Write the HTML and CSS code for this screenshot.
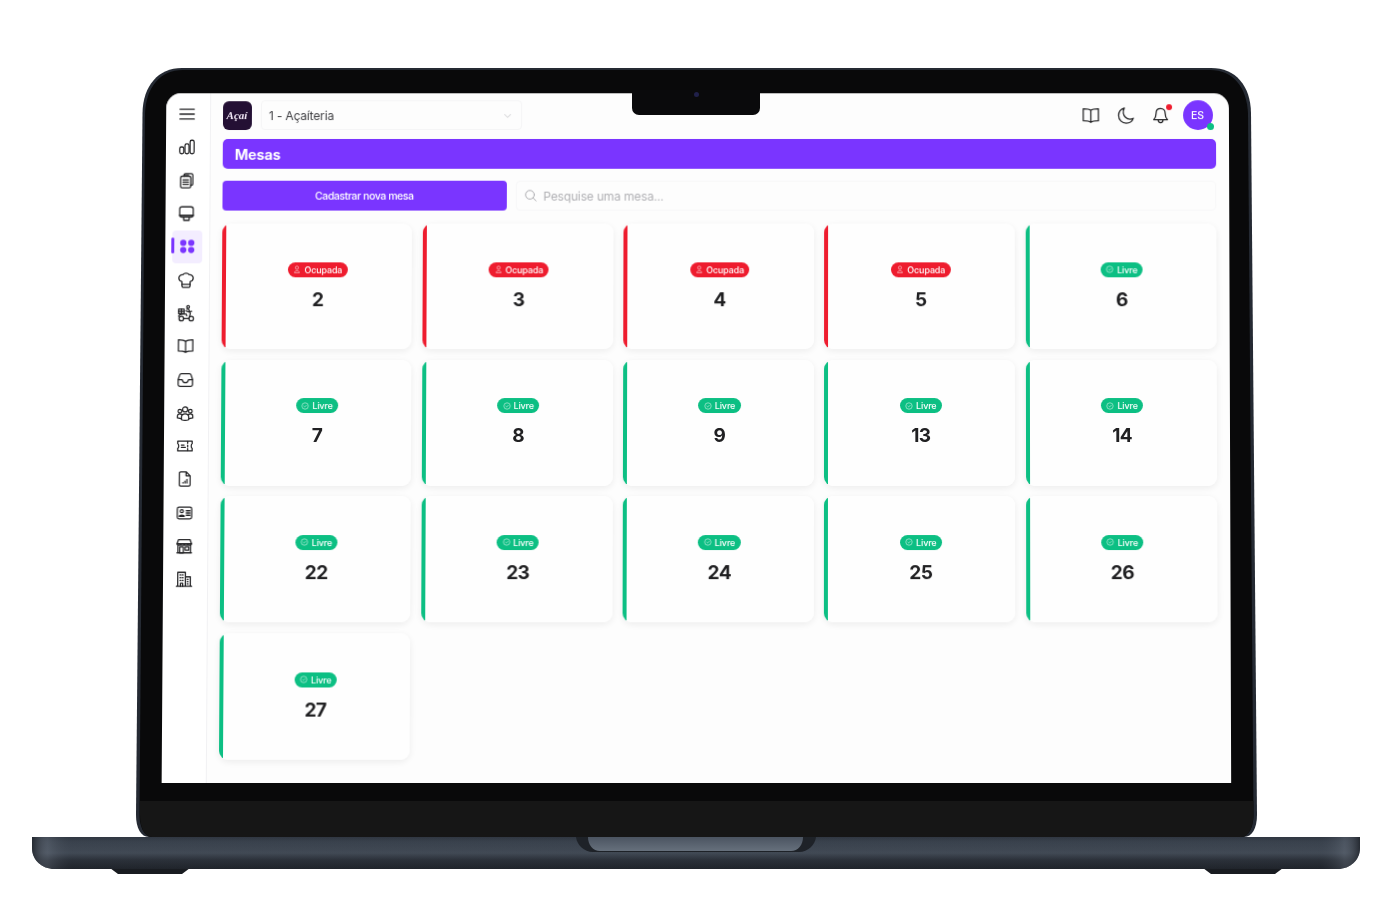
FILE: index.html
```html
<!DOCTYPE html>
<html lang="pt-BR">
<head>
<meta charset="utf-8">
<title>Mesas</title>
<link rel="stylesheet" href="styles.css">
</head>
<body>
<div class="laptop">
  <div class="lid">
    <svg class="lid-shape" viewBox="0 0 1121 769" width="1121" height="769">
      <path fill="#252a33" d="M46 0H1075C1100 0 1114.500 18 1115 45L1121 747C1121 760 1116 769 1108 769H13C5 769 0 760 0 747L6.500 45C7 18 22 0 46 0Z"/>
      <path fill="#09090a" d="M47 2H1074C1097 2 1111 19 1112 46L1117.500 747C1117.500 758 1113 769 1105 769H16C8 769 3.500 758 3.500 747L9 46C10 19 24 2 47 2Z"/>
      <path fill="#161616" d="M4 733H1117.300V747C1117.300 758 1113 769 1105 769H16C8 769 4 758 4 747Z"/>
    </svg>
    <div class="screen">
      <aside class="sidebar">
        <div class="side-item"><svg class="ico" viewBox="0 0 20 20"><path d="M2 4.500H18M2 10H18M2 15.500H18"/></svg></div>
        <div class="side-item"><svg class="ico" viewBox="0 0 20 20"><rect x="2" y="10" width="4.500" height="7.500" rx="2"/><rect x="7.800" y="6.500" width="4.500" height="11" rx="2"/><rect x="13.500" y="2.500" width="4.500" height="15" rx="2"/></svg></div>
        <div class="side-item"><svg class="ico" viewBox="0 0 20 20"><path d="M7 5V3.800C7 2.800 7.800 2 8.800 2H15C16 2 16.800 2.800 16.800 3.800V13.500C16.800 14.500 16 15 15 15H14.500"/><rect x="3.200" y="5" width="11.300" height="13" rx="1.800"/><path d="M7 3.500H12M5.800 9H12M5.800 11.500H12M5.800 14H12"/></svg></div>
        <div class="side-item"><svg class="ico" viewBox="0 0 20 20"><rect x="2.500" y="2.500" width="15" height="11.500" rx="2.500"/><path d="M2.500 12H17.500" class="thick"/><path d="M7 14V17.500H13V14"/></svg></div>
        <div class="side-item side-active">
          <svg class="ico-fill" viewBox="0 0 20 20"><circle cx="5" cy="5.500" r="3.900"/><circle cx="15" cy="5.500" r="3.900"/><circle cx="5" cy="14.500" r="3.900"/><circle cx="15" cy="14.500" r="3.900"/></svg>
        </div>
        <div class="side-item"><svg class="ico" viewBox="0 0 20 20"><path d="M5.500 14.500V11.500C3.500 11 2 9.500 2 7.500C2 5 4.200 3.500 6.500 3.800C7.300 2.700 8.600 2 10 2C11.400 2 12.700 2.700 13.500 3.800C15.800 3.500 18 5 18 7.500C18 9.500 16.500 11 14.500 11.500V14.500Z"/><path d="M5.500 14.500V16.500C5.500 17.300 6 18 7 18H13C14 18 14.500 17.300 14.500 16.500V14.500"/></svg></div>
        <div class="side-item"><svg class="ico" viewBox="0 0 20 20"><circle cx="5" cy="16" r="2.500"/><circle cx="16" cy="16" r="2.500"/><path d="M7.500 16H13.500L15 10.500L13 5.500H11M2 13.500C2.500 11.500 4.500 11 7 11H10.500L11 13"/><rect x="2" y="5.500" width="6" height="5"/><path d="M5 5.500V10.500M2 8H8"/><rect x="11" y="1.500" width="3" height="3" rx="1.500"/><path d="M10 7.500L13 8.500L16.500 8"/></svg></div>
        <div class="side-item"><svg class="ico" viewBox="0 0 20 20"><path d="M10 5C8.500 3.500 6 3 2 3V15.500C6 15.500 8.500 16 10 17C11.500 16 14 15.500 18 15.500V3C14 3 11.500 3.500 10 5ZM10 5V17"/></svg></div>
        <div class="side-item"><svg class="ico" viewBox="0 0 20 20"><path d="M5.500 3H14.500C15.500 3 16 3.500 16.300 4.300L18 9.500V15C18 16.100 17.100 17 16 17H4C2.900 17 2 16.100 2 15V9.500L3.700 4.300C4 3.500 4.500 3 5.500 3Z"/><path d="M2.300 9.500H6.500C7 12 8.300 13 10 13C11.700 13 13 12 13.500 9.500H17.700"/></svg></div>
        <div class="side-item"><svg class="ico" viewBox="0 0 20 20"><circle cx="10" cy="6" r="2.800"/><circle cx="4.200" cy="8" r="2"/><circle cx="15.800" cy="8" r="2"/><path d="M6 17.500V14.500C6 12.500 7.500 11 10 11C12.500 11 14 12.500 14 14.500V17.500C12 18.200 8 18.200 6 17.500Z"/><path d="M6 11.500C5.300 11.100 4.800 11 4 11C2.500 11 1.500 12 1.500 13.500V15.500L5.500 16.300M14 11.500C14.700 11.100 15.200 11 16 11C17.500 11 18.500 12 18.500 13.500V15.500L14.500 16.300"/></svg></div>
        <div class="side-item"><svg class="ico" viewBox="0 0 20 20"><path d="M2 4.500H18V7.500C16.600 8 16.600 12 18 12.500V15.500H2V12.500C3.400 12 3.400 8 2 7.500Z"/><path d="M13 5V7M13 9V11M13 13V15M6 11.500H10.500M6 9H9"/></svg></div>
        <div class="side-item"><svg class="ico" viewBox="0 0 20 20"><path d="M4 3.500C4 2.700 4.700 2 5.500 2H11.500L16 6.500V16.500C16 17.300 15.300 18 14.500 18H5.500C4.700 18 4 17.300 4 16.500ZM11.500 2V6.500H16"/><path d="M8 14.500V14M10.200 14.500V12.500M12.400 14.500V10.500"/></svg></div>
        <div class="side-item"><svg class="ico" viewBox="0 0 20 20"><rect x="2" y="3.500" width="16" height="13" rx="2"/><circle cx="7" cy="8" r="1.700"/><path d="M4.300 13.800C4.300 11.800 9.700 11.800 9.700 13.800ZM12 7.500H16M12 10H16M12 12.500H16"/></svg></div>
        <div class="side-item"><svg class="ico" viewBox="0 0 20 20"><path d="M3.500 3H16.500L18 7.500H2ZM3 7.500V17.500H17V7.500M2 17.500H18"/><path d="M2 7.500C2 9.500 6 9.500 6 7.500C6 9.500 10 9.500 10 7.500C10 9.500 14 9.500 14 7.500C14 9.500 18 9.500 18 7.500"/><rect x="5" y="11" width="4" height="6.500"/><rect x="11" y="11" width="4" height="3.500"/></svg></div>
        <div class="side-item"><svg class="ico" viewBox="0 0 20 20"><path d="M3 18V2.500H11.500V18M11.500 7.500H17V18M1.500 18H18.500"/><path d="M5.500 5.500H6.500M8 5.500H9M5.500 8.500H6.500M8 8.500H9M5.500 11.500H6.500M8 11.500H9M6 18V14.500H8.500V18M13.500 10.500H14.500M13.500 13H14.500M13.500 15.500H14.500"/></svg></div>
      </aside>
      <main class="main">
        <header class="topbar">
          <div class="logo"><span class="logo-text">Açaí</span></div>
          <div class="store-select">
            <span>1 - Açaíteria</span>
            <svg class="chev" viewBox="0 0 12 12"><path d="M2.500 4.500L6 8L9.500 4.500"/></svg>
          </div>
          <div class="top-actions">
            <svg class="top-ico" viewBox="0 0 20 20"><path d="M10 4.500C8.500 3.200 6 2.800 2 2.800V15.500C6 15.500 8.500 16 10 17.200C11.500 16 14 15.500 18 15.500V2.800C14 2.800 11.500 3.200 10 4.500ZM10 4.500V17.200"/></svg>
            <svg class="top-ico" viewBox="0 0 20 20"><path d="M8.500 2C5 3 2.500 6.200 2.500 10C2.500 14.500 6 18 10.500 18C14 18 17 15.800 18 12.800C16.800 13.500 15.700 13.700 14.500 13.700C10.800 13.700 8 10.800 7.500 7.500C7.300 5.500 7.700 3.500 8.500 2Z"/></svg>
            <div class="bell"><svg class="top-ico" viewBox="0 0 20 20"><path d="M10 2.500C7 2.500 5.200 4.700 5.200 7.500C5.200 11 4.500 12.500 2.700 14.300H17.300C15.500 12.500 14.800 11 14.800 7.500C14.800 4.700 13 2.500 10 2.500ZM7.500 14.500C7.500 16.200 8.500 17.500 10 17.500C11.500 17.500 12.500 16.200 12.500 14.500"/></svg><span class="bell-dot"></span></div>
            <div class="avatar">ES<span class="online"></span></div>
          </div>
        </header>
        <div class="title-bar">Mesas</div>
        <div class="toolbar">
          <button class="btn-new">Cadastrar nova mesa</button>
          <div class="search">
            <svg class="search-ico" viewBox="0 0 16 16"><circle cx="7" cy="7" r="5"/><path d="M10.700 10.700L14 14"/></svg>
            <span>Pesquise uma mesa...</span>
          </div>
        </div>
        <div class="grid">
          <div class="card busy"><span class="badge"><svg class="b-ico" viewBox="0 0 10 10"><circle cx="5" cy="3" r="2"/><path d="M2 9.300C2 5.800 8 5.800 8 9.300Z"/></svg>Ocupada</span><span class="num">2</span></div>
          <div class="card busy"><span class="badge"><svg class="b-ico" viewBox="0 0 10 10"><circle cx="5" cy="3" r="2"/><path d="M2 9.300C2 5.800 8 5.800 8 9.300Z"/></svg>Ocupada</span><span class="num">3</span></div>
          <div class="card busy"><span class="badge"><svg class="b-ico" viewBox="0 0 10 10"><circle cx="5" cy="3" r="2"/><path d="M2 9.300C2 5.800 8 5.800 8 9.300Z"/></svg>Ocupada</span><span class="num">4</span></div>
          <div class="card busy"><span class="badge"><svg class="b-ico" viewBox="0 0 10 10"><circle cx="5" cy="3" r="2"/><path d="M2 9.300C2 5.800 8 5.800 8 9.300Z"/></svg>Ocupada</span><span class="num">5</span></div>
          <div class="card free"><span class="badge"><svg class="b-ico" viewBox="0 0 10 10"><circle cx="5" cy="5" r="4"/><path d="M3.300 5L4.500 6.200L6.800 3.900"/></svg>Livre</span><span class="num">6</span></div>
          <div class="card free"><span class="badge"><svg class="b-ico" viewBox="0 0 10 10"><circle cx="5" cy="5" r="4"/><path d="M3.300 5L4.500 6.200L6.800 3.900"/></svg>Livre</span><span class="num">7</span></div>
          <div class="card free"><span class="badge"><svg class="b-ico" viewBox="0 0 10 10"><circle cx="5" cy="5" r="4"/><path d="M3.300 5L4.500 6.200L6.800 3.900"/></svg>Livre</span><span class="num">8</span></div>
          <div class="card free"><span class="badge"><svg class="b-ico" viewBox="0 0 10 10"><circle cx="5" cy="5" r="4"/><path d="M3.300 5L4.500 6.200L6.800 3.900"/></svg>Livre</span><span class="num">9</span></div>
          <div class="card free"><span class="badge"><svg class="b-ico" viewBox="0 0 10 10"><circle cx="5" cy="5" r="4"/><path d="M3.300 5L4.500 6.200L6.800 3.900"/></svg>Livre</span><span class="num">13</span></div>
          <div class="card free"><span class="badge"><svg class="b-ico" viewBox="0 0 10 10"><circle cx="5" cy="5" r="4"/><path d="M3.300 5L4.500 6.200L6.800 3.900"/></svg>Livre</span><span class="num">14</span></div>
          <div class="card free"><span class="badge"><svg class="b-ico" viewBox="0 0 10 10"><circle cx="5" cy="5" r="4"/><path d="M3.300 5L4.500 6.200L6.800 3.900"/></svg>Livre</span><span class="num">22</span></div>
          <div class="card free"><span class="badge"><svg class="b-ico" viewBox="0 0 10 10"><circle cx="5" cy="5" r="4"/><path d="M3.300 5L4.500 6.200L6.800 3.900"/></svg>Livre</span><span class="num">23</span></div>
          <div class="card free"><span class="badge"><svg class="b-ico" viewBox="0 0 10 10"><circle cx="5" cy="5" r="4"/><path d="M3.300 5L4.500 6.200L6.800 3.900"/></svg>Livre</span><span class="num">24</span></div>
          <div class="card free"><span class="badge"><svg class="b-ico" viewBox="0 0 10 10"><circle cx="5" cy="5" r="4"/><path d="M3.300 5L4.500 6.200L6.800 3.900"/></svg>Livre</span><span class="num">25</span></div>
          <div class="card free"><span class="badge"><svg class="b-ico" viewBox="0 0 10 10"><circle cx="5" cy="5" r="4"/><path d="M3.300 5L4.500 6.200L6.800 3.900"/></svg>Livre</span><span class="num">26</span></div>
          <div class="card free"><span class="badge"><svg class="b-ico" viewBox="0 0 10 10"><circle cx="5" cy="5" r="4"/><path d="M3.300 5L4.500 6.200L6.800 3.900"/></svg>Livre</span><span class="num">27</span></div>
        </div>
      </main>
    </div>
    <div class="notch"><span class="camera"></span></div>
  </div>
  <svg class="base" viewBox="0 0 1328 37" width="1328" height="37">
    <defs>
      <linearGradient id="baseV" x1="0" y1="0" x2="0" y2="1">
        <stop offset="0" stop-color="#333a45"/>
        <stop offset=".15" stop-color="#3e4753"/>
        <stop offset=".5" stop-color="#47505c"/>
        <stop offset=".72" stop-color="#2d333c"/>
        <stop offset="1" stop-color="#20242b"/>
      </linearGradient>
      <linearGradient id="baseH" x1="0" y1="0" x2="1" y2="0">
        <stop offset="0" stop-color="#20242b" stop-opacity=".85"/>
        <stop offset=".012" stop-color="#68707c" stop-opacity=".35"/>
        <stop offset=".03" stop-color="#20242b" stop-opacity=".15"/>
        <stop offset=".97" stop-color="#20242b" stop-opacity=".15"/>
        <stop offset=".988" stop-color="#68707c" stop-opacity=".35"/>
        <stop offset="1" stop-color="#20242b" stop-opacity=".85"/>
      </linearGradient>
      <linearGradient id="hinge" x1="0" y1="0" x2="0" y2="1">
        <stop offset="0" stop-color="#4b5461"/>
        <stop offset="1" stop-color="#66707c"/>
      </linearGradient>
    </defs>
    <path fill="#191c21" d="M78 31H158L150 37H86ZM1171 31H1251L1243 37H1179Z"/>
    <path fill="url(#baseV)" d="M0 0H1328V11C1328 23 1318 32 1306 32H22C10 32 0 23 0 11Z"/>
    <path fill="url(#baseH)" d="M0 0H1328V11C1328 23 1318 32 1306 32H22C10 32 0 23 0 11Z"/>
    <path fill="#1e2228" d="M544 0H784C783 8 776 15 767 15H561C552 15 545 8 544 0Z"/>
    <path fill="url(#hinge)" d="M556 0H771C771 8 766 14 759 14H568C561 14 556 8 556 0Z"/>
  </svg>
</div>
</body>
</html>
```
FILE: styles.css
```css
* { box-sizing: border-box; }
html, body { margin: 0; height: 100%; background: #fff; overflow: hidden; }
body { font-family: Inter, "Noto Sans", sans-serif; color: #222; }

.laptop { padding: 68px 0 0 32px; }

.lid {
  position: relative;
  width: 1121px;
  height: 769px;
  margin-left: 103.5px;
  padding: 24px 0 0 28.5px;
}
.lid-shape { position: absolute; left: 0; top: 0; display: block; }

.screen {
  position: relative;
  display: flex;
  width: 1066px;
  height: 690px;
  background: #fdfdfd;
  border-radius: 15px 15px 0 0;
  overflow: hidden;
  transform: perspective(3000px) rotateX(1.64deg) skewX(-0.1deg);
  filter: blur(0.35px);
}

.sidebar {
  flex: 0 0 45px;
  display: flex;
  flex-direction: column;
  align-items: center;
  padding: 4.5px 2px 0 0;
  background: #fff;
  border-right: 1px solid #f1f1f3;
}
.side-item {
  position: relative;
  flex: 0 0 33.3px;
  width: 30px;
  display: flex;
  align-items: center;
  justify-content: center;
}
.side-active { margin-left: 2px; background: #f3edff; border-radius: 4px; height: 30px; }
.side-active::before {
  content: "";
  position: absolute;
  left: -1px;
  top: 7px;
  width: 3px;
  height: 16px;
  border-radius: 2px;
  background: #7a35ff;
}
.ico { width: 18px; height: 18px; fill: none; stroke: #252527; stroke-width: 1.4; stroke-linejoin: round; stroke-linecap: round; }
.ico .thick { stroke-width: 2; }
.ico-fill { width: 16px; height: 16px; fill: #7a35ff; }

.main { flex: 1; min-width: 0; padding: 0 13.5px 0 11.5px; }

.topbar { display: flex; align-items: center; height: 46px; padding-bottom: 1.5px; }
.logo {
  flex: 0 0 29px;
  height: 29px;
  border-radius: 6px;
  background: #241034;
  display: flex;
  align-items: center;
  justify-content: center;
}
.logo-text { font: italic 700 11px "Liberation Serif", serif; color: #f2e8f7; }
.store-select {
  flex: 0 0 262px;
  height: 30px;
  margin-left: 9px;
  padding: 0 7.5px;
  display: flex;
  align-items: center;
  justify-content: space-between;
  border: 1px solid #f5f5f6;
  border-radius: 4px;
  font-size: 12px;
  letter-spacing: -0.15px;
  color: #3e3e42;
}
.chev { width: 11px; height: 11px; fill: none; stroke: #dcdcde; stroke-width: 1.2; }
.top-actions { margin-left: auto; display: flex; align-items: center; gap: 16px; padding-right: 3px; }
.top-ico { width: 19px; height: 19px; display: block; fill: none; stroke: #202022; stroke-width: 1.3; stroke-linejoin: round; stroke-linecap: round; }
.bell { position: relative; }
.bell-dot { position: absolute; right: -2px; top: -2px; width: 6px; height: 6px; border-radius: 50%; background: #ef1c2e; }
.avatar {
  position: relative;
  width: 30px;
  height: 30px;
  margin-left: -3.5px;
  border-radius: 50%;
  background: #7a35ff;
  color: #fff;
  font-size: 10.5px;
  font-weight: 500;
  display: flex;
  align-items: center;
  justify-content: center;
}
.online { position: absolute; right: -1px; bottom: 0; width: 7px; height: 7px; border-radius: 50%; background: #0cbf83; }

.title-bar {
  height: 30px;
  padding-left: 12.5px;
  display: flex;
  align-items: center;
  background: #7a35ff;
  border-radius: 5px;
  color: #fff;
  font-size: 14.5px;
  font-weight: 700;
  letter-spacing: -0.2px;
}

.toolbar { display: flex; gap: 9px; height: 30px; margin-top: 12px; }
.btn-new {
  flex: 0 0 285.5px;
  border: 0;
  border-radius: 4px;
  background: #7a35ff;
  color: #fff;
  font-family: inherit;
  font-size: 10.5px;
  font-weight: 500;
  letter-spacing: -0.4px;
}
.search {
  flex: 1;
  display: flex;
  align-items: center;
  gap: 6px;
  padding-left: 6.500px;
  border: 1px solid #f7f7f8;
  border-radius: 4px;
  font-size: 12px;
  letter-spacing: -0.15px;
  color: #b0b0b4;
}
.search-ico { width: 14px; height: 14px; fill: none; stroke: #a8a8ac; stroke-width: 1.1; stroke-linecap: round; }

.grid {
  display: grid;
  grid-template-columns: repeat(5, 1fr);
  grid-auto-rows: 126px;
  gap: 10.7px 10.5px;
  margin-top: 13px;
}
.card {
  display: flex;
  flex-direction: column;
  align-items: center;
  padding: 38.5px 0 0 2px;
  border-radius: 9px;
  box-shadow: 0 2px 7px rgba(0, 0, 0, 0.07);
}
.busy { background: linear-gradient(to right, #ee1c2e 4px, #fefefe 4px); }
.free { background: linear-gradient(to right, #0cbf83 4px, #fefefe 4px); }
.badge {
  height: 15px;
  padding: 0 5.5px;
  display: flex;
  align-items: center;
  gap: 3px;
  border-radius: 8px;
  color: #fff;
  font-size: 9px;
  font-weight: 500;
  letter-spacing: -0.15px;
}
.busy .badge { background: #ee1c2e; }
.free .badge { background: #0cbf83; }
.b-ico { width: 8px; height: 8px; fill: none; stroke: #fff; stroke-opacity: 0.8; stroke-width: 0.8; }
.num { margin-top: 11px; font-size: 19px; line-height: 24px; font-weight: 650; letter-spacing: -0.6px; color: #202022; }

.notch {
  position: absolute;
  left: 496.5px;
  top: 22px;
  width: 128px;
  height: 25px;
  background: #0a0a0c;
  border-radius: 0 0 7px 7px;
  display: flex;
  justify-content: center;
}
.camera { width: 5px; height: 5px; margin-top: 1.5px; border-radius: 50%; background: #20204a; }

.base { display: block; }
```
